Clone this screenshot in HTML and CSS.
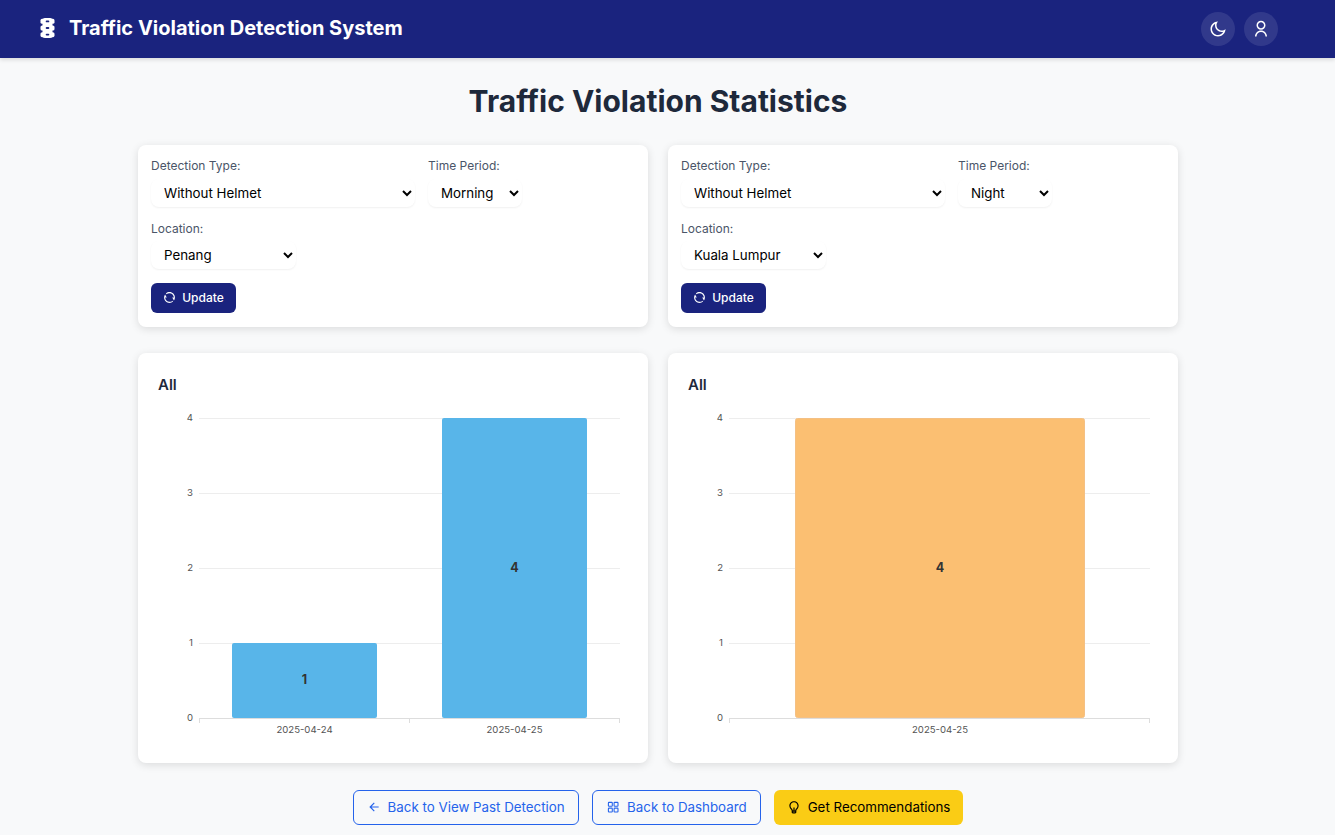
FILE: index.html
```html
<html lang="en">
<head>
    <meta charset="UTF-8">
    <meta name="viewport" content="width=device-width, initial-scale=1.0">
    <title>Traffic Violation Statistics</title>
    <link rel="stylesheet" href="styles.css">
</head>
<body>
    <header class="navbar">
        <div class="brand">
            <svg class="brand-icon" viewBox="0 0 15 20" width="15" height="20">
                <rect x="2.5" y="0" width="10" height="20" rx="2.5" fill="#fff"/>
                <rect x="0.5" y="0.8" width="14" height="5" rx="1.6" fill="#fff"/>
                <rect x="0.5" y="7.5" width="14" height="5" rx="1.6" fill="#fff"/>
                <rect x="0.5" y="14.2" width="14" height="5" rx="1.6" fill="#fff"/>
                <rect x="5.7" y="2.5" width="3.6" height="1.8" rx="0.9" fill="#1a237e"/>
                <rect x="5.7" y="9.1" width="3.6" height="1.8" rx="0.9" fill="#1a237e"/>
                <rect x="5.7" y="15.7" width="3.6" height="1.8" rx="0.9" fill="#1a237e"/>
            </svg>
            <span>Traffic Violation Detection System</span>
        </div>
        <div class="nav-actions">
            <button class="round-btn" aria-label="Theme">
                <svg viewBox="0 0 24 24" width="18" height="18"><path fill="#fff" d="M10 7C10 10.866 13.134 14 17 14C18.9584 14 20.729 13.1957 21.9995 11.8995C22 11.933 22 11.9665 22 12C22 17.5228 17.5228 22 12 22C6.47715 22 2 17.5228 2 12C2 6.47715 6.47715 2 12 2C12.0335 2 12.067 2 12.1005 2.00049C10.8043 3.27098 10 5.04157 10 7ZM4 12C4 16.4183 7.58172 20 12 20C15.0583 20 17.7158 18.2839 19.062 15.7621C18.3945 15.9187 17.7035 16 17 16C12.0294 16 8 11.9706 8 7C8 6.29648 8.08133 5.60547 8.2379 4.938C5.71611 6.28423 4 8.94174 4 12Z"/></svg>
            </button>
            <button class="round-btn" aria-label="Account">
                <svg viewBox="0 0 24 24" width="18" height="18"><path fill="#fff" d="M4 22C4 17.5817 7.58172 14 12 14C16.4183 14 20 17.5817 20 22H18C18 18.6863 15.3137 16 12 16C8.68629 16 6 18.6863 6 22H4ZM12 13C8.685 13 6 10.315 6 7C6 3.685 8.685 1 12 1C15.315 1 18 3.685 18 7C18 10.315 15.315 13 12 13ZM12 11C14.21 11 16 9.21 16 7C16 4.79 14.21 3 12 3C9.79 3 8 4.79 8 7C8 9.21 9.79 11 12 11Z"/></svg>
            </button>
        </div>
    </header>

    <main class="container">
        <h1>Traffic Violation Statistics</h1>

        <div class="two-col">
            <section class="card filter-card">
                <div class="filter-row">
                    <div class="field">
                        <label>Detection Type:</label>
                        <select class="sel-type"><option>Without Helmet</option></select>
                    </div>
                    <div class="field">
                        <label>Time Period:</label>
                        <select class="sel-time"><option>Morning</option></select>
                    </div>
                </div>
                <div class="filter-row">
                    <div class="field">
                        <label>Location:</label>
                        <select class="sel-loc"><option>Penang</option></select>
                    </div>
                </div>
                <button class="update-btn">
                    <svg viewBox="0 0 24 24" width="13" height="13"><path fill="#fff" d="M5.46257 4.43262C7.21556 2.91688 9.5007 2 12 2C17.5228 2 22 6.47715 22 12C22 14.1361 21.3302 16.1158 20.1892 17.7406L17 12H20C20 7.58172 16.4183 4 12 4C9.84982 4 7.89777 4.84827 6.46023 6.22842L5.46257 4.43262ZM18.5374 19.5674C16.7844 21.0831 14.4993 22 12 22C6.47715 22 2 17.5228 2 12C2 9.86386 2.66979 7.88416 3.8108 6.25944L7 12H4C4 16.4183 7.58172 20 12 20C14.1502 20 16.1022 19.1517 17.5398 17.7716L18.5374 19.5674Z"/></svg>
                    Update
                </button>
            </section>

            <section class="card filter-card">
                <div class="filter-row">
                    <div class="field">
                        <label>Detection Type:</label>
                        <select class="sel-type"><option>Without Helmet</option></select>
                    </div>
                    <div class="field">
                        <label>Time Period:</label>
                        <select class="sel-time"><option>Night</option></select>
                    </div>
                </div>
                <div class="filter-row">
                    <div class="field">
                        <label>Location:</label>
                        <select class="sel-loc"><option>Kuala Lumpur</option></select>
                    </div>
                </div>
                <button class="update-btn">
                    <svg viewBox="0 0 24 24" width="13" height="13"><path fill="#fff" d="M5.46257 4.43262C7.21556 2.91688 9.5007 2 12 2C17.5228 2 22 6.47715 22 12C22 14.1361 21.3302 16.1158 20.1892 17.7406L17 12H20C20 7.58172 16.4183 4 12 4C9.84982 4 7.89777 4.84827 6.46023 6.22842L5.46257 4.43262ZM18.5374 19.5674C16.7844 21.0831 14.4993 22 12 22C6.47715 22 2 17.5228 2 12C2 9.86386 2.66979 7.88416 3.8108 6.25944L7 12H4C4 16.4183 7.58172 20 12 20C14.1502 20 16.1022 19.1517 17.5398 17.7716L18.5374 19.5674Z"/></svg>
                    Update
                </button>
            </section>
        </div>

        <div class="two-col charts">
            <section class="card chart-card">
                <h3>All</h3>
                <svg class="chart" viewBox="0 0 470 340" width="470" height="340">
                    <g class="grid">
                        <line x1="41" y1="18.5" x2="462" y2="18.5"/>
                        <line x1="41" y1="93.5" x2="462" y2="93.5"/>
                        <line x1="41" y1="168.5" x2="462" y2="168.5"/>
                        <line x1="41" y1="243.5" x2="462" y2="243.5"/>
                    </g>
                    <g class="axis">
                        <line x1="41" y1="318.5" x2="462" y2="318.5"/>
                        <line x1="41.5" y1="318" x2="41.5" y2="323"/>
                        <line x1="251.5" y1="318" x2="251.5" y2="323"/>
                        <line x1="461.5" y1="318" x2="461.5" y2="323"/>
                    </g>
                    <g class="ticks y-ticks">
                        <text x="35" y="21">4</text>
                        <text x="35" y="96">3</text>
                        <text x="35" y="171">2</text>
                        <text x="35" y="246">1</text>
                        <text x="35" y="321">0</text>
                    </g>
                    <rect class="bar-blue" x="74" y="243" width="145" height="75" rx="2"/>
                    <rect class="bar-blue" x="284" y="18" width="145" height="300" rx="2"/>
                    <text class="bar-label" x="146.5" y="284">1</text>
                    <text class="bar-label" x="356.5" y="171.5">4</text>
                    <g class="ticks x-ticks">
                        <text x="146.5" y="332.5">2025-04-24</text>
                        <text x="356.5" y="332.5">2025-04-25</text>
                    </g>
                </svg>
            </section>

            <section class="card chart-card">
                <h3>All</h3>
                <svg class="chart" viewBox="0 0 470 340" width="470" height="340">
                    <g class="grid">
                        <line x1="41" y1="18.5" x2="462" y2="18.5"/>
                        <line x1="41" y1="93.5" x2="462" y2="93.5"/>
                        <line x1="41" y1="168.5" x2="462" y2="168.5"/>
                        <line x1="41" y1="243.5" x2="462" y2="243.5"/>
                    </g>
                    <g class="axis">
                        <line x1="41" y1="318.5" x2="462" y2="318.5"/>
                        <line x1="41.5" y1="318" x2="41.5" y2="323"/>
                        <line x1="461.5" y1="318" x2="461.5" y2="323"/>
                    </g>
                    <g class="ticks y-ticks">
                        <text x="35" y="21">4</text>
                        <text x="35" y="96">3</text>
                        <text x="35" y="171">2</text>
                        <text x="35" y="246">1</text>
                        <text x="35" y="321">0</text>
                    </g>
                    <rect class="bar-orange" x="107.5" y="18.5" width="289" height="299" rx="2"/>
                    <text class="bar-label" x="252" y="171.5">4</text>
                    <g class="ticks x-ticks">
                        <text x="252" y="332.5">2025-04-25</text>
                    </g>
                </svg>
            </section>
        </div>

        <div class="page-actions">
            <a class="btn btn-outline" href="#">
                <svg viewBox="0 0 24 24" width="14" height="14"><path fill="currentColor" d="M7.82843 10.9999H20V12.9999H7.82843L13.1924 18.3638L11.7782 19.778L4 11.9999L11.7782 4.22168L13.1924 5.63589L7.82843 10.9999Z"/></svg>
                Back to View Past Detection
            </a>
            <a class="btn btn-outline" href="#">
                <svg viewBox="0 0 24 24" width="14.4" height="14.4" fill="none" stroke="currentColor" stroke-width="1.8"><rect x="4" y="4" width="6.5" height="6.5" rx="1"/><rect x="13.5" y="4" width="6.5" height="6.5" rx="1"/><rect x="4" y="13.5" width="6.5" height="6.5" rx="1"/><rect x="13.5" y="13.5" width="6.5" height="6.5" rx="1"/></svg>
                Back to Dashboard
            </a>
            <a class="btn btn-yellow" href="#">
                <svg viewBox="0 0 24 24" width="14" height="14"><path fill="currentColor" d="M9.97308 18H11V13H13V18H14.0269C14.1589 16.7984 14.7721 15.8065 15.7676 14.7226C15.8797 14.6006 16.5988 13.8564 16.6841 13.7501C17.5318 12.6931 18 11.385 18 10C18 6.68629 15.3137 4 12 4C8.68629 4 6 6.68629 6 10C6 11.3843 6.46774 12.6917 7.31462 13.7484C7.40004 13.855 8.12081 14.6012 8.23154 14.7218C9.22766 15.8064 9.84103 16.7984 9.97308 18ZM10 20V21H14V20H10ZM5.75395 15C4.65645 13.6304 4 11.8919 4 10C4 5.58172 7.58172 2 12 2C16.4183 2 20 5.58172 20 10C20 11.8931 19.3428 13.6326 18.2447 15.0024C17.5714 15.8416 16 17 16 18.5V21C16 22.1046 15.1046 23 14 23H10C8.89543 23 8 22.1046 8 21V18.5C8 17 6.42718 15.8413 5.75395 15Z"/></svg>
                Get Recommendations
            </a>
        </div>
    </main>
</body>
</html>
```

FILE: styles.css
```css
* {
    box-sizing: border-box;
}
body {
    font-family: 'Inter', 'Liberation Sans', sans-serif;
    background-color: #f8f9fa;
    color: #1e293b;
    margin: 0;
}

.navbar {
    height: 58px;
    background-color: #1a237e;
    box-shadow: 0 2px 4px rgba(0, 0, 0, 0.12);
    display: flex;
    align-items: center;
    justify-content: space-between;
    padding: 0 57px 0 40px;
}
.brand {
    display: flex;
    align-items: center;
    gap: 14px;
    color: #ffffff;
    font-size: 20px;
    font-weight: 700;
    line-height: 24px;
    padding-bottom: 2px;
}
.brand-icon {
    display: block;
}
.nav-actions {
    display: flex;
    gap: 9px;
}
.round-btn {
    width: 34px;
    height: 34px;
    border: none;
    border-radius: 50%;
    background: rgba(255, 255, 255, 0.1);
    padding: 0;
    display: flex;
    align-items: center;
    justify-content: center;
}

.container {
    width: 1040px;
    margin: 0 0 0 138px;
    padding-bottom: 10px;
}
h1 {
    font-size: 30px;
    font-weight: 700;
    line-height: 39px;
    text-align: center;
    margin: 24px 0 24px;
    color: #1e293b;
}
.two-col {
    display: grid;
    grid-template-columns: 510px 510px;
    gap: 20px;
}
.charts {
    margin-top: 26px;
}
.card {
    background: #ffffff;
    border-radius: 8px;
    box-shadow: 0 2px 8px rgba(0, 0, 0, 0.12);
}

.filter-card {
    height: 182px;
    padding: 13px;
}
.filter-row {
    display: flex;
    gap: 13px;
    margin-bottom: 14px;
}
.field label {
    display: block;
    font-size: 12px;
    line-height: 15px;
    color: #4a5568;
    margin-bottom: 6px;
}
.field select {
    display: block;
    height: 28px;
    font-family: inherit;
    font-size: 13.33px;
    color: #000000;
    background: #ffffff;
    border: none;
    border-radius: 8px;
    box-shadow: 0 1px 2px rgba(0, 0, 0, 0.06);
    padding: 0 13px 0 9px;
}
.sel-type {
    width: 264px;
}
.sel-time {
    width: 94px;
}
.field .sel-loc {
    width: 145px;
    margin-top: -1px;
}
.update-btn {
    height: 30px;
    width: 85px;
    border: none;
    border-radius: 6px;
    background-color: #1a237e;
    color: #ffffff;
    font-family: inherit;
    font-size: 12px;
    font-weight: 500;
    display: flex;
    align-items: center;
    justify-content: center;
    gap: 6px;
    padding: 0 0 1px;
}

.chart-card {
    height: 410px;
    padding: 21px 20px 20px;
}
.chart-card h3 {
    font-size: 15px;
    font-weight: 600;
    line-height: 22px;
    margin: 0 0 4px;
    color: #1e293b;
}
.chart {
    display: block;
}
.grid line {
    stroke: #ededed;
    stroke-width: 1;
}
.axis line {
    stroke: #dddddd;
    stroke-width: 1;
}
.ticks text {
    font-family: 'Inter', 'Liberation Sans', sans-serif;
    font-size: 9.6px;
    fill: #555555;
}
.y-ticks text {
    text-anchor: end;
}
.x-ticks text {
    text-anchor: middle;
}
.bar-blue {
    fill: #58b5e9;
}
.bar-orange {
    fill: #fbbf72;
    stroke: #f4c084;
    stroke-width: 1;
}
.bar-label {
    font-family: 'Inter', 'Liberation Sans', sans-serif;
    font-size: 12.5px;
    font-weight: 700;
    fill: #333333;
    text-anchor: middle;
}

.page-actions {
    display: flex;
    justify-content: center;
    gap: 13px;
    margin-top: 27px;
}
.btn {
    height: 35px;
    padding: 0 13px 1px;
    border-radius: 6px;
    display: flex;
    align-items: center;
    gap: 7px;
    font-size: 13.33px;
    text-decoration: none;
}
.btn-outline {
    color: #2563eb;
    border: 1px solid #2563eb;
}
.btn-yellow {
    color: #000000;
    background-color: #facc15;
}
```
